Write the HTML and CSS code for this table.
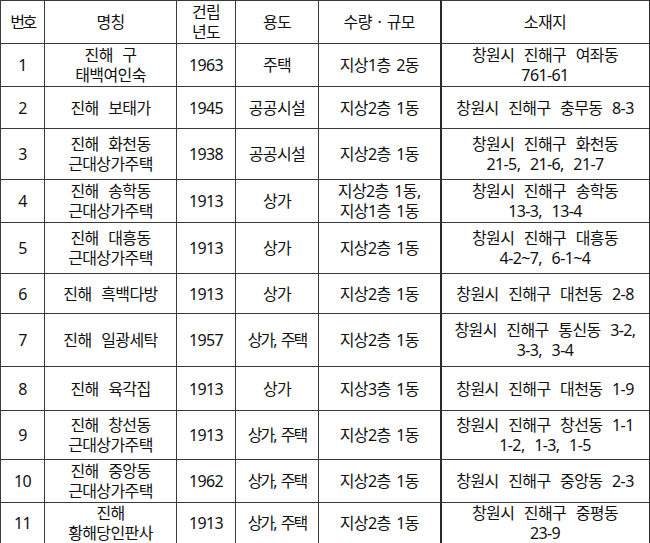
FILE: index.html
```html
<!DOCTYPE html>
<html lang="ko">
<head>
<meta charset="utf-8">
<link rel="stylesheet" href="styles.css">
</head>
<body>
<table class="heritage">
  <colgroup>
    <col class="c-no">
    <col class="c-name">
    <col class="c-year">
    <col class="c-use">
    <col class="c-size">
    <col class="c-addr">
  </colgroup>
  <thead>
    <tr class="r-head">
      <th><span class="narrow">번호</span></th>
      <th>명칭</th>
      <th>건립<br>년도</th>
      <th>용도</th>
      <th><span class="mid">수량 · 규모</span></th>
      <th class="addr">소재지</th>
    </tr>
  </thead>
  <tbody>
    <tr class="r1">
      <td>1</td><td>진해 구<br>태백여인숙</td><td>1963</td><td>주택</td><td><span class="mid">지상1층 2동</span></td><td class="addr">창원시 진해구 여좌동<br>761-61</td>
    </tr>
    <tr class="r2">
      <td>2</td><td>진해 보태가</td><td>1945</td><td>공공시설</td><td><span class="mid">지상2층 1동</span></td><td class="addr">창원시 진해구 충무동 8-3</td>
    </tr>
    <tr class="r3">
      <td>3</td><td>진해 화천동<br>근대상가주택</td><td>1938</td><td>공공시설</td><td><span class="mid">지상2층 1동</span></td><td class="addr">창원시 진해구 화천동<br>21-5, 21-6, 21-7</td>
    </tr>
    <tr class="r4">
      <td>4</td><td>진해 송학동<br>근대상가주택</td><td>1913</td><td>상가</td><td><span class="mid">지상2층 1동,<br>지상1층 1동</span></td><td class="addr">창원시 진해구 송학동<br>13-3, 13-4</td>
    </tr>
    <tr class="r5">
      <td>5</td><td>진해 대흥동<br>근대상가주택</td><td>1913</td><td>상가</td><td><span class="mid">지상2층 1동</span></td><td class="addr">창원시 진해구 대흥동<br>4-2~7, 6-1~4</td>
    </tr>
    <tr class="r6">
      <td>6</td><td>진해 흑백다방</td><td>1913</td><td>상가</td><td><span class="mid">지상2층 1동</span></td><td class="addr">창원시 진해구 대천동 2-8</td>
    </tr>
    <tr class="r7">
      <td>7</td><td>진해 일광세탁</td><td>1957</td><td><span class="tight">상가, 주택</span></td><td><span class="mid">지상2층 1동</span></td><td class="addr">창원시 진해구 통신동 3-2,<br>3-3, 3-4</td>
    </tr>
    <tr class="r8">
      <td>8</td><td>진해 육각집</td><td>1913</td><td>상가</td><td><span class="mid">지상3층 1동</span></td><td class="addr">창원시 진해구 대천동 1-9</td>
    </tr>
    <tr class="r9">
      <td>9</td><td>진해 창선동<br>근대상가주택</td><td>1913</td><td><span class="tight">상가, 주택</span></td><td><span class="mid">지상2층 1동</span></td><td class="addr">창원시 진해구 창선동 1-1<br>1-2, 1-3, 1-5</td>
    </tr>
    <tr class="r10">
      <td>10</td><td>진해 중앙동<br>근대상가주택</td><td>1962</td><td><span class="tight">상가, 주택</span></td><td><span class="mid">지상2층 1동</span></td><td class="addr">창원시 진해구 중앙동 2-3</td>
    </tr>
    <tr class="r11">
      <td>11</td><td>진해<br>황해당인판사</td><td>1913</td><td><span class="tight">상가, 주택</span></td><td><span class="mid">지상2층 1동</span></td><td class="addr">창원시 진해구 중평동<br>23-9</td>
    </tr>
  </tbody>
</table>
</body>
</html>
```

FILE: styles.css
```css
html, body {
  margin: 0;
  padding: 0;
  background: #ffffff;
}

.heritage {
  border-collapse: collapse;
  table-layout: fixed;
  width: 649px;
  font-family: "Noto Sans", "Noto Sans CJK KR", sans-serif;
  font-size: 16px;
  line-height: 20px;
  letter-spacing: -0.6px;
  word-spacing: 6px;
  color: #111111;
}

.c-no { width: 44px; }
.c-name { width: 132px; }
.c-year { width: 59px; }
.c-use { width: 83px; }
.c-size { width: 122px; }
.c-addr { width: 209px; }

.heritage th,
.heritage td {
  border: 1px solid #3a3a3a;
  padding: 0;
  text-align: center;
  vertical-align: middle;
  font-weight: normal;
  white-space: nowrap;
  overflow: hidden;
}

.heritage .addr {
  border-left: 2px solid #2a2a2a;
  border-right: 2px solid #2a2a2a;
}

.narrow {
  letter-spacing: -2.5px;
}

.mid {
  word-spacing: 2px;
}

.tight {
  letter-spacing: -2px;
  word-spacing: 3px;
}

.r-head { height: 43px; }
.r1 { height: 43px; }
.r2 { height: 42px; }
.r3 { height: 51px; }
.r4 { height: 43px; }
.r5 { height: 51px; }
.r6 { height: 40px; }
.r7 { height: 53px; }
.r8 { height: 44px; }
.r9 { height: 49px; }
.r10 { height: 43px; }
.r11 { height: 40px; }
```
